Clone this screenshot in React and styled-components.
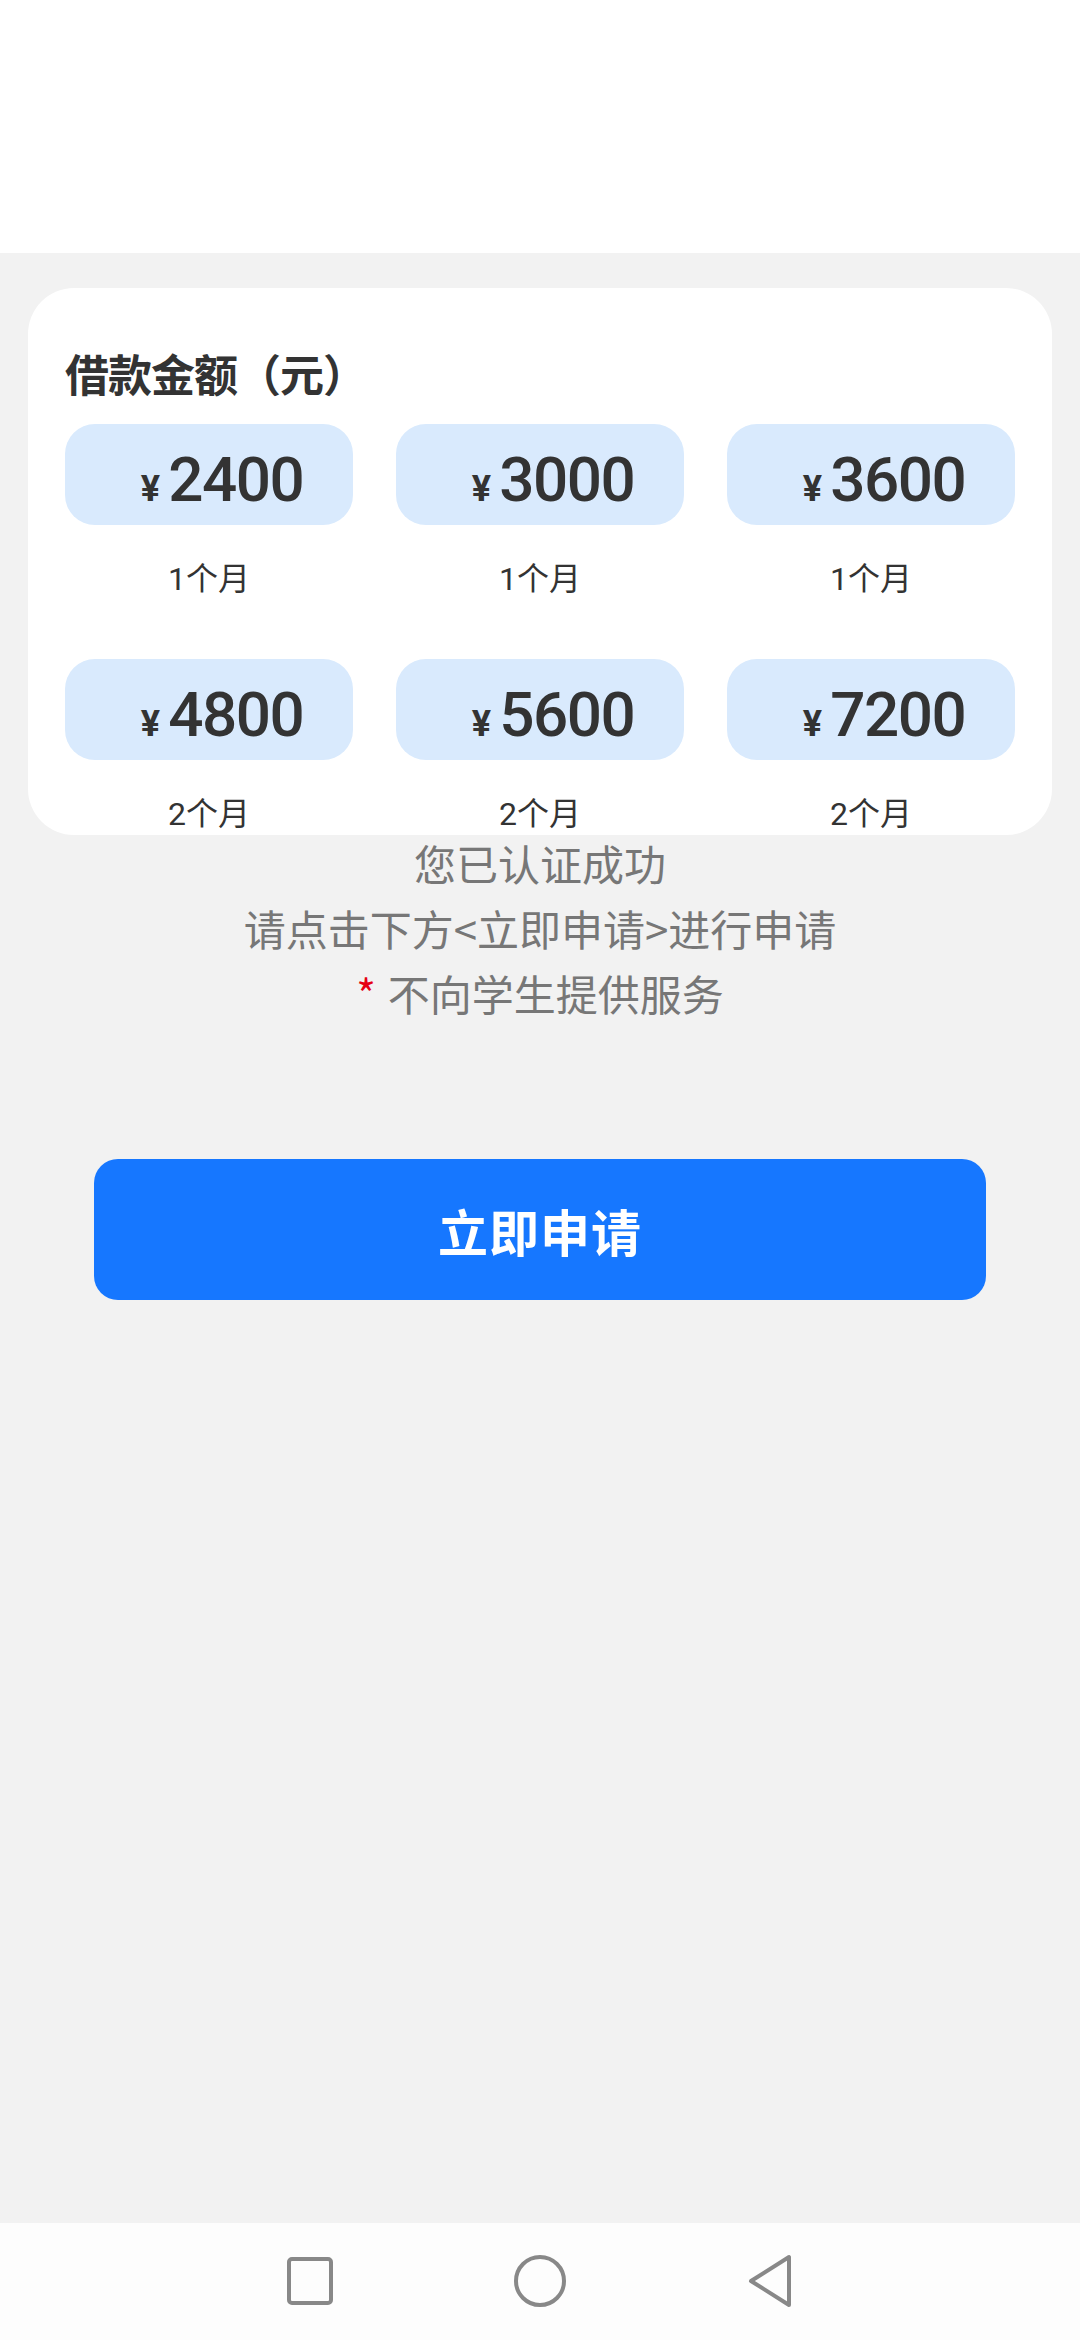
import React from 'react';
import styled, { createGlobalStyle } from 'styled-components';

const GlobalStyle = createGlobalStyle`
  html, body {
    margin: 0;
    padding: 0;
    background: #f2f2f2;
  }
  body {
    font-family: Roboto, "Noto Sans CJK SC", sans-serif;
  }
`;

const Page = styled.div`
  width: 1080px;
  height: 2340px;
  display: flex;
  flex-direction: column;
  background: #f2f2f2;
`;

const Header = styled.div`
  height: 253px;
  background: #ffffff;
`;

const Body = styled.div`
  flex: 1;
  display: flex;
  flex-direction: column;
  align-items: center;
  padding-top: 35px;
`;

const Card = styled.div`
  width: 1024px;
  box-sizing: border-box;
  height: 547px;
  background: #fff;
  border-radius: 46px;
  padding: 56px 38px 0 37px;
  overflow: hidden;
`;

const Title = styled.div`
  font-family: "Noto Sans CJK SC", sans-serif;
  font-size: 44px;
  font-weight: 700;
  line-height: 58px;
  color: #333;
  letter-spacing: -1px;
`;

const Grid = styled.div`
  margin-top: 22px;
  display: grid;
  grid-template-columns: repeat(3, 288px);
  column-gap: 43px;
  row-gap: 58px;
`;

const Option = styled.div`
  display: flex;
  flex-direction: column;
  align-items: center;
`;

const Tile = styled.div`
  width: 100%;
  height: 101px;
  box-sizing: border-box;
  padding: 10px 0 0 26px;
  border-radius: 30px;
  background: #d9eafd;
  display: flex;
  align-items: center;
  justify-content: center;
  color: #333;
`;

const Yen = styled.span`
  font-family: Roboto, sans-serif;
  font-size: 36px;
  font-weight: 700;
  margin-right: 8px;
  margin-top: 18px;
`;

const Amount = styled.span`
  font-family: Roboto, sans-serif;
  font-size: 62px;
  font-weight: 500;
  letter-spacing: -1.5px;
  line-height: 1;
`;

const Term = styled.div`
  margin-top: 32px;
  font-family: Roboto, "Noto Sans CJK SC", sans-serif;
  font-size: 32px;
  line-height: 44px;
  color: #333;
`;

const Notice = styled.div`
  margin-top: -5px;
  font-family: "Noto Sans CJK SC", sans-serif;
  font-size: 42px;
  line-height: 65px;
  color: #777;
  text-align: center;
`;

const Star = styled.span`
  color: #e60012;
  margin-right: 12px;
`;

const ApplyButton = styled.button`
  margin-top: 134px;
  width: 892px;
  height: 141px;
  border: 0;
  border-radius: 24px;
  background: #1677ff;
  color: #fff;
  font-family: "Noto Sans CJK SC", sans-serif;
  font-size: 50px;
  font-weight: 700;
  letter-spacing: 1px;
`;

const NavBar = styled.div`
  height: 117px;
  background: #fdfdfd;
  display: flex;
  align-items: center;
  justify-content: center;
`;

const NavSlot = styled.div`
  width: 230px;
  display: flex;
  justify-content: center;
  padding-bottom: 2px;
`;

const options = [
  { amount: '2400', term: '1个月' },
  { amount: '3000', term: '1个月' },
  { amount: '3600', term: '1个月' },
  { amount: '4800', term: '2个月' },
  { amount: '5600', term: '2个月' },
  { amount: '7200', term: '2个月' },
];

export default function App() {
  return (
    <Page>
      <GlobalStyle />
      <Header />
      <Body>
        <Card>
          <Title>借款金额（元）</Title>
          <Grid>
            {options.map((o) => (
              <Option key={o.amount}>
                <Tile>
                  <Yen>¥</Yen>
                  <Amount>{o.amount}</Amount>
                </Tile>
                <Term>{o.term}</Term>
              </Option>
            ))}
          </Grid>
        </Card>
        <Notice>
          您已认证成功
          <br />
          请点击下方&lt;立即申请&gt;进行申请
          <br />
          <Star>*</Star>不向学生提供服务
        </Notice>
        <ApplyButton>立即申请</ApplyButton>
      </Body>
      <NavBar>
        <NavSlot>
          <svg width="48" height="50" viewBox="0 0 48 50">
            <rect x="3" y="3" width="42" height="44" rx="3" fill="none" stroke="#888" strokeWidth="4" />
          </svg>
        </NavSlot>
        <NavSlot>
          <svg width="54" height="54" viewBox="0 0 54 54">
            <circle cx="27" cy="27" r="24" fill="none" stroke="#888" strokeWidth="4" />
          </svg>
        </NavSlot>
        <NavSlot>
          <svg width="48" height="54" viewBox="0 0 48 54">
            <path d="M43 3 L43 51 L5 27 Z" fill="none" stroke="#888" strokeWidth="4" strokeLinejoin="round" />
          </svg>
        </NavSlot>
      </NavBar>
    </Page>
  );
}
